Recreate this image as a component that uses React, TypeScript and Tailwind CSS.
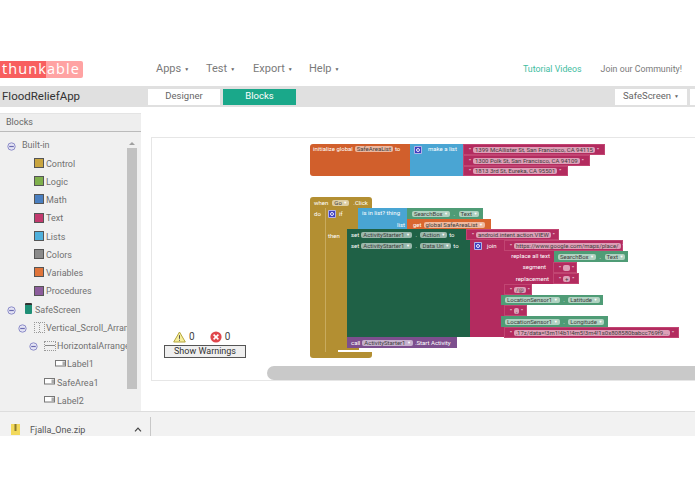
import type { ReactNode } from "react";

const Caret = () => <span className="ml-[3px] text-[5px] text-[#666] align-[1px]">▼</span>;

const Minus = ({ className = "" }: { className?: string }) => (
  <svg width="9" height="9" viewBox="0 0 9 9" className={`shrink-0 ${className}`}>
    <circle cx="4.5" cy="4.5" r="3.7" fill="#e4e4f4" stroke="#8c8cc8" />
    <path d="M2.2 4.5h4.6" stroke="#6a6ab0" strokeWidth="1.2" />
  </svg>
);

const Swatch = ({ className }: { className: string }) => (
  <span className={`w-[10px] h-[10px] border border-[#555] -mt-[3px] shrink-0 ${className}`} />
);

const LabelIcon = () => (
  <svg width="11" height="7" viewBox="0 0 11 7" className="shrink-0 -mt-[4px]">
    <rect x="0.5" y="0.5" width="10" height="5.5" fill="#fff" stroke="#777" />
    <rect x="7.5" y="1.5" width="2.5" height="4" fill="#aaa" />
  </svg>
);

const Row = ({ pad, children }: { pad: string; children: ReactNode }) => (
  <div className={`h-[18.25px] flex items-center whitespace-nowrap ${pad}`}>{children}</div>
);

const Sidebar = () => (
  <aside className="w-[141px] shrink-0 flex flex-col pt-[6px]">
    <div className="h-[19px] bg-[#eeeeee] border-t border-[#e4e4e4] border-b border-b-[#bbbbbb] pl-[6px] flex items-center text-[9px] text-[#666]">
      Blocks
    </div>
    <div className="relative flex-1 bg-[#f0f0f0] pt-[5px] overflow-hidden">
      <div className="w-[127px] text-[9px] text-[#707070]">
        <Row pad="pl-[7px] gap-[6px]"><Minus />Built-in</Row>
        <Row pad="pl-[34px] gap-[2px]"><Swatch className="bg-[#c9a53f]" />Control</Row>
        <Row pad="pl-[34px] gap-[2px]"><Swatch className="bg-[#7fb04c]" />Logic</Row>
        <Row pad="pl-[34px] gap-[2px]"><Swatch className="bg-[#4a7fc0]" />Math</Row>
        <Row pad="pl-[34px] gap-[2px]"><Swatch className="bg-[#c23a6e]" />Text</Row>
        <Row pad="pl-[34px] gap-[2px]"><Swatch className="bg-[#4fb0dc]" />Lists</Row>
        <Row pad="pl-[34px] gap-[2px]"><Swatch className="bg-[#8a8a8a]" />Colors</Row>
        <Row pad="pl-[34px] gap-[2px]"><Swatch className="bg-[#e0743a]" />Variables</Row>
        <Row pad="pl-[34px] gap-[2px]"><Swatch className="bg-[#8c5d9c]" />Procedures</Row>
        <Row pad="pl-[7px]">
          <Minus />
          <span className="w-[7px] h-[11px] ml-[9px] mr-[3px] -mt-[3px] rounded-[1px] bg-[#1f8f76] border-t-2 border-[#333] shrink-0" />
          SafeScreen
        </Row>
        <Row pad="pl-[18px]">
          <Minus />
          <span className="w-[11px] h-[11px] ml-[7px] mr-px -mt-[2px] border border-dotted border-[#999] shrink-0 grid grid-cols-2">
            <span className="border-r border-dotted border-[#999]" />
          </span>
          Vertical_Scroll_Arran
        </Row>
        <Row pad="pl-[29px]">
          <Minus />
          <span className="w-[12px] h-[10px] ml-[6px] mr-px -mt-[2px] border border-dotted border-[#999] shrink-0 grid grid-rows-2">
            <span className="border-b border-[#888]" />
          </span>
          HorizontalArrange
        </Row>
        <Row pad="pl-[55px] gap-px"><LabelIcon />Label1</Row>
        <Row pad="pl-[44px] gap-[2px]"><LabelIcon />SafeArea1</Row>
        <Row pad="pl-[44px] gap-[2px]"><LabelIcon />Label2</Row>
      </div>
      <div className="absolute left-[127px] top-[16px] w-[10px] h-[241px] bg-[#c2c2c2]" />
      <div className="absolute left-[129px] top-[10px] w-0 h-0 border-x-[3px] border-x-transparent border-b-[3px] border-b-[#a0a0a0]" />
    </div>
  </aside>
);

const F = ({ children }: { children: ReactNode }) => (
  <span className="px-[2px] rounded-[2px] bg-white/55 text-[#3d3d3d] whitespace-nowrap">{children}</span>
);

const D = ({ children }: { children: ReactNode }) => (
  <span className="px-[2px] rounded-[2px] bg-white/55 text-[#3d3d3d] whitespace-nowrap">
    {children} <span className="text-[4px] text-white align-[1px]">▼</span>
  </span>
);

const Dot = () => <span className="mx-[1.5px]">.</span>;

const Gear = () => (
  <span className="w-[8px] h-[8px] rounded-[1px] bg-[#3f3fc0] border border-white/60 shrink-0 flex items-center justify-center">
    <span className="w-[4px] h-[4px] rounded-full border border-white/90" />
  </span>
);

const B = ({ className, children }: { className: string; children?: ReactNode }) => (
  <div className={`absolute flex items-center gap-[2px] px-[3px] text-[6px] leading-none text-white whitespace-nowrap ${className}`}>
    {children}
  </div>
);

const S = ({ className, children }: { className: string; children: ReactNode }) => (
  <B className={`bg-[#b32b5f] border border-[#c9567f]/60 ${className}`}>
    <span className="ml-[2px]">"</span>
    <F>{children}</F>
    <span>"</span>
  </B>
);

const Canvas = () => (
  <div className="relative h-[244px] bg-white border-y border-l border-[#e6e6e6] overflow-hidden">
    <B className="left-[158px] top-[6px] w-[100px] h-[32px] bg-[#d15f2c] rounded-l-[3px] !items-start pt-[2px]">
      initialize global <F>SafeAreaList</F> to
    </B>
    <B className="left-[258px] top-[6px] w-[53px] h-[32px] bg-[#4aa5d3] !items-start pt-[2px] pl-[4px] gap-[6px]">
      <Gear /> make a list
    </B>
    <S className="left-[311px] top-[6px] w-[142px] h-[11px]">1399 McAllister St, San Francisco, CA 94115</S>
    <S className="left-[311px] top-[17px] w-[127px] h-[11px]">1300 Polk St, San Francisco, CA 94109</S>
    <S className="left-[311px] top-[28px] w-[105px] h-[10px]">1813 3rd St, Eureka, CA 95501</S>

    <B className="left-[158px] top-[59px] w-[62px] h-[11px] bg-[#b38f32] rounded-t-[3px] pl-[4px] gap-[4px]">
      when <D>Go</D> .Click
    </B>
    <div className="absolute left-[158px] top-[70px] w-[15px] h-[147px] bg-[#b38f32]" />
    <B className="left-[158px] top-[70px] w-[15px] h-[11px] pl-[4px]">do</B>
    <div className="absolute left-[158px] top-[214px] w-[62px] h-[6px] bg-[#b38f32] rounded-b-[3px]" />
    <div className="absolute left-[173px] top-[70px] w-[34px] h-[144px] bg-[#b38f32] border-l border-[#c8ab5e]" />
    <B className="left-[173px] top-[70px] w-[34px] h-[11px] pl-[3px] gap-[3px]"><Gear /> if</B>
    <B className="left-[173px] top-[92px] w-[21px] h-[11px] pl-[3px]">then</B>
    <div className="absolute left-[186px] top-[212px] w-[34px] h-[2px] bg-white" />

    <B className="left-[206px] top-[70px] w-[53px] h-[22px] bg-[#49a5d3] !items-start pt-[2px] pl-[4px]">is in list? thing</B>
    <B className="left-[206px] top-[81px] w-[53px] h-[11px] justify-end pr-[6px]">list</B>
    <B className="left-[255px] top-[70px] w-[76px] h-[11px] bg-[#4f9c76] pl-[5px]">
      <D>SearchBox</D><Dot /><D>Text</D>
    </B>
    <B className="left-[255px] top-[81px] w-[84px] h-[11px] bg-[#d9662f] pl-[6px]">
      get <D>global SafeAreaList</D>
    </B>

    <div className="absolute left-[195px] top-[91px] w-[123px] h-[108px] bg-[#1f6146]" />
    <B className="left-[195px] top-[91px] w-[123px] h-[11px] pl-[4px]">
      set <D>ActivityStarter1</D><Dot /><D>Action</D> to
    </B>
    <B className="left-[195px] top-[102px] w-[123px] h-[11px] pl-[4px]">
      set <D>ActivityStarter1</D><Dot /><D>Data Uri</D> to
    </B>

    <S className="left-[314px] top-[91px] w-[93px] h-[11px]">android.intent.action.VIEW</S>
    <div className="absolute left-[318px] top-[102px] w-[34px] h-[97px] bg-[#b32b5f]" />
    <B className="left-[318px] top-[102px] w-[34px] h-[11px] pl-[4px] gap-[5px]"><Gear /> join</B>
    <S className="left-[352px] top-[102px] w-[119px] h-[11px]">https://www.google.com/maps/place/</S>
    <B className="left-[352px] top-[113px] w-[50px] h-[22px] bg-[#b32b5f] !block text-right pt-[2px] pr-[4px]">
      <div className="h-[11px]">replace all text</div>
      <div className="h-[10px] pr-[4px]">segment</div>
    </B>
    <B className="left-[352px] top-[135px] w-[50px] h-[11px] bg-[#b32b5f] justify-end pr-[5px]">replacement</B>
    <B className="left-[402px] top-[113px] w-[74px] h-[11px] bg-[#4f9c76] pl-[4px]">
      <D>SearchBox</D><Dot /><D>Text</D>
    </B>
    <S className="left-[401px] top-[124px] w-[24px] h-[11px]">&nbsp;&nbsp;</S>
    <S className="left-[401px] top-[135px] w-[26px] h-[11px]">+</S>
    <S className="left-[352px] top-[146px] w-[28px] h-[11px]">/@</S>
    <B className="left-[349px] top-[157px] w-[102px] h-[10px] bg-[#4f9c76] pl-[4px]">
      <D>LocationSensor1</D><Dot /><D>Latitude</D>
    </B>
    <S className="left-[352px] top-[167px] w-[23px] h-[11px]">,</S>
    <B className="left-[349px] top-[178px] w-[107px] h-[11px] bg-[#4f9c76] pl-[4px]">
      <D>LocationSensor1</D><Dot /><D>Longitude</D>
    </B>
    <S className="left-[352px] top-[189px] w-[175px] h-[11px]">,17z/data=!3m1!4b1!4m5!3m4!1s0x808580babcc769f9...</S>

    <B className="left-[195px] top-[199px] w-[110px] h-[11px] bg-[#7d4f8e] pl-[4px]">
      call <D>ActivityStarter1</D> .Start Activity
    </B>

    <div className="absolute left-[13px] top-[193px] flex items-center text-[10px] leading-none text-[#444]">
      <svg width="13" height="12" viewBox="0 0 13 12" className="ml-[8px]">
        <path d="M6.5 1 12.3 11H.7Z" fill="#f6ee9c" stroke="#b4a53c" />
        <path d="M6.5 4.2v3.6M6.5 8.8v1" stroke="#555" strokeWidth="1" />
      </svg>
      <span className="ml-[3px]">0</span>
      <svg width="12" height="12" viewBox="0 0 12 12" className="ml-[15px]">
        <circle cx="6" cy="6" r="5.6" fill="#e0474c" />
        <path d="M3.6 3.6 8.4 8.4M8.4 3.6 3.6 8.4" stroke="#fff" strokeWidth="1.6" />
      </svg>
      <span className="ml-[3px]">0</span>
    </div>
    <div className="absolute left-[12px] top-[207px] w-[82px] h-[13px] bg-[#efefef] border border-[#555] flex items-center justify-center text-[9px] leading-none text-[#333]">
      Show Warnings
    </div>

    <div className="absolute left-[115px] right-0 top-[228px] h-[14px] rounded-l-[7px] bg-[#c9c9c9]" />
  </div>
);

export default function App() {
  return (
    <div className="w-[695px] h-[494px] bg-white overflow-hidden font-['Roboto',sans-serif]">
      <div className="h-[61px]" />
      <header className="h-[25px] flex items-start">
        <div className="w-[83px] h-[17px] rounded-r-[2px] flex items-center pl-[2px] bg-gradient-to-r from-[#f85f5f] from-[55%] to-[#ffa3a3] to-[55%] font-['Open_Sans',sans-serif] text-[14.5px] tracking-[1.1px] text-white leading-none">
          thunkable
        </div>
        <nav className="flex h-[17px] items-center text-[11px] text-[#7a7a7a] whitespace-nowrap">
          <span className="ml-[73px] w-[50px]">Apps<Caret /></span>
          <span className="w-[47px]">Test<Caret /></span>
          <span className="w-[56px]">Export<Caret /></span>
          <span>Help<Caret /></span>
        </nav>
        <div className="ml-auto pr-[13px] flex h-[17px] items-center gap-[19px] text-[8.8px] whitespace-nowrap">
          <span className="text-[#3fbd9f]">Tutorial Videos</span>
          <span className="text-[#7a7a7a]">Join our Community!</span>
        </div>
      </header>

      <div className="h-[21px] bg-[#e0e0e0] flex items-center">
        <span className="w-[148px] pl-[2px] text-[11.5px] text-[#333]">FloodReliefApp</span>
        <div className="w-[72px] h-[16px] bg-white flex items-center justify-center text-[9.5px] text-[#666]">Designer</div>
        <div className="w-[73px] h-[16px] ml-[3px] bg-[#1aa88a] flex items-center justify-center text-[9.5px] text-white">Blocks</div>
        <div className="w-[72px] h-[16px] ml-auto bg-white flex items-center justify-center text-[9.5px] text-[#666]">
          SafeScreen<Caret />
        </div>
        <div className="w-[5px] h-[16px] ml-[3px] bg-white" />
      </div>

      <main className="h-[304px] flex">
        <Sidebar />
        <div className="flex-1 min-w-0 pl-[10px] pt-[30px]">
          <Canvas />
        </div>
      </main>

      <footer className="h-[25px] bg-[#f2f2f2] border-t border-[#dddddd] flex text-[9px] text-[#555] overflow-hidden">
        <div className="w-[151px] flex items-end border-r border-[#c8c8c8] mt-[5px] relative">
          <svg width="9" height="11" viewBox="0 0 9 11" className="ml-[11px] mb-[1px]">
            <rect width="9" height="11" fill="#f2d95c" />
            <rect x="3.5" width="2" height="7" fill="#8a7a30" />
          </svg>
          <span className="ml-[10px] leading-[12px]">Fjalla_One.zip</span>
          <svg width="8" height="5" viewBox="0 0 8 5" className="ml-[49px] mb-[4px]">
            <path d="M1 4.3 4 1.2 7 4.3" fill="none" stroke="#444" strokeWidth="1.2" />
          </svg>
        </div>
      </footer>
    </div>
  );
}
